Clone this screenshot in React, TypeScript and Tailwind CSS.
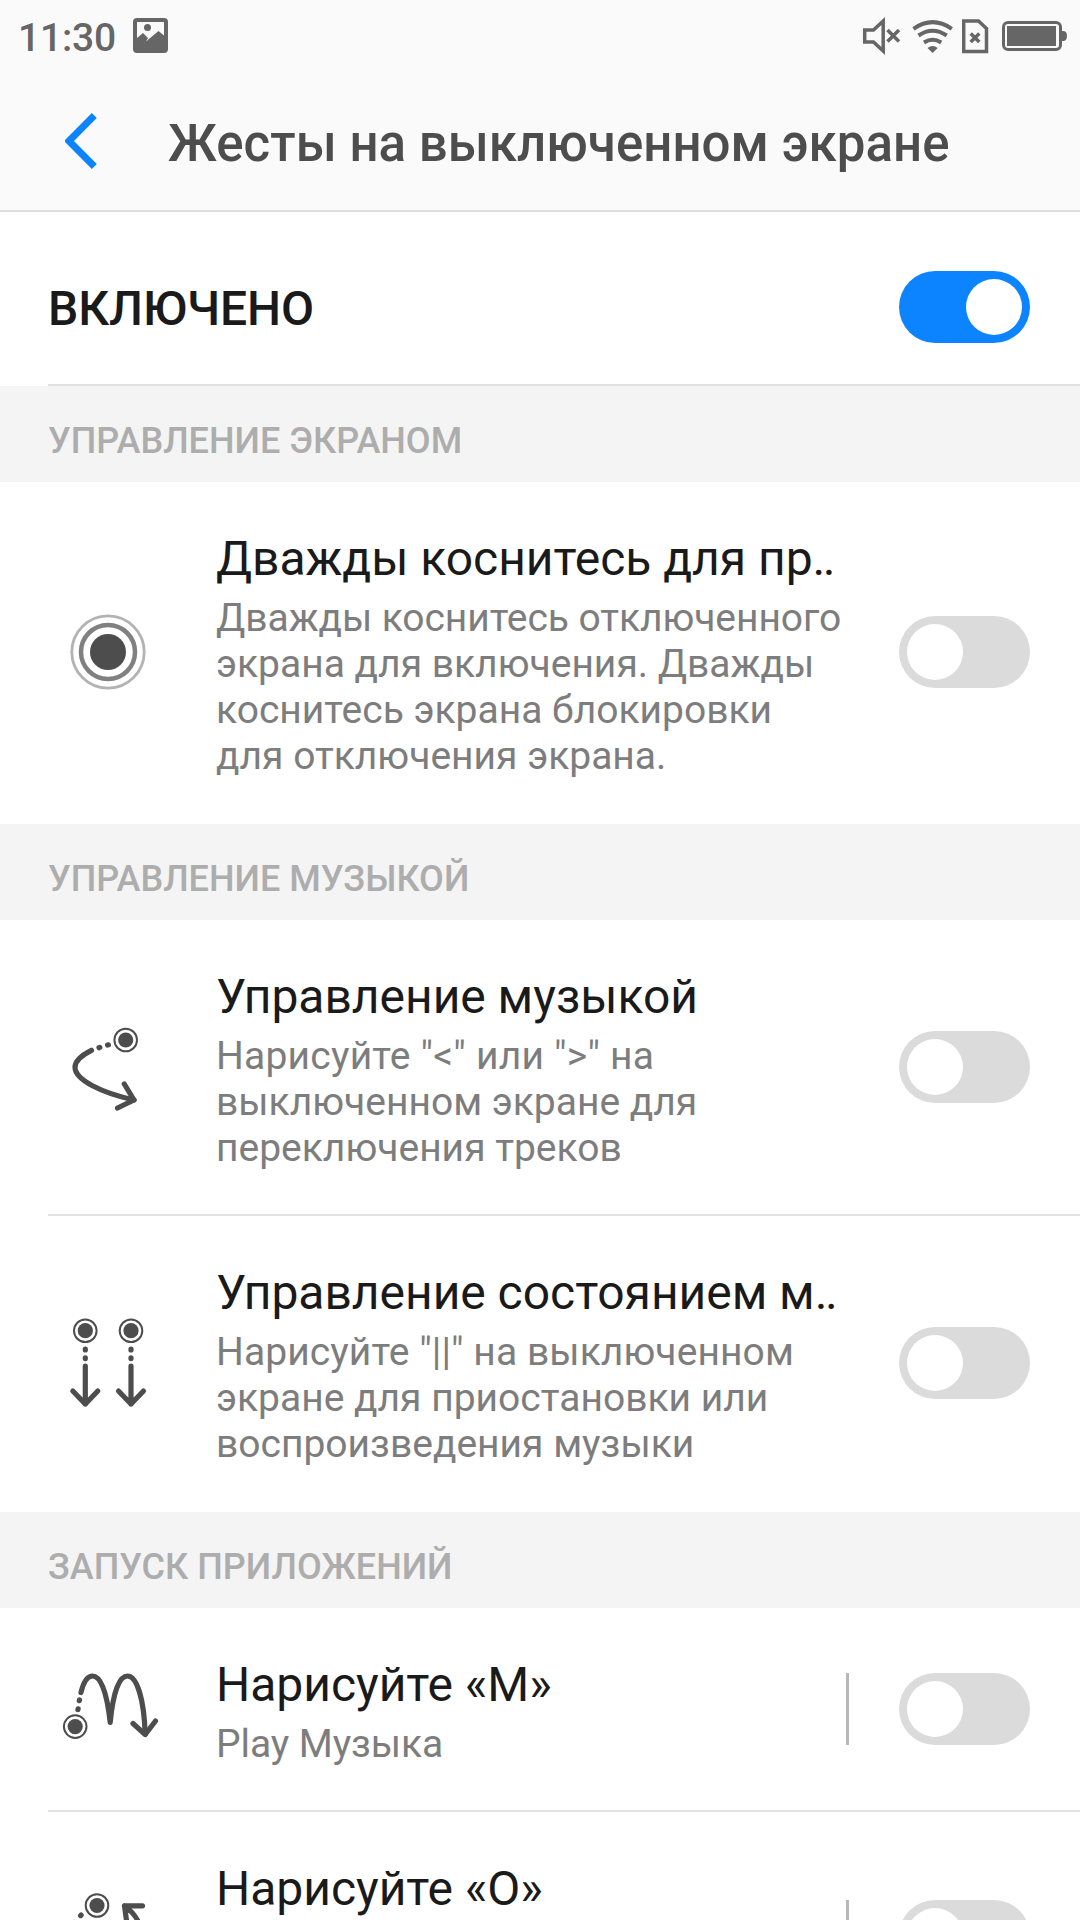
import type { ReactNode } from "react";

const DARK = "#4d4d4d";
const STATUS = "#666666";

function Toggle({ on = false }: { on?: boolean }) {
  return (
    <span
      className={`flex h-[72px] w-[131px] shrink-0 items-center rounded-full px-2 ${
        on ? "justify-end bg-[#0d84ff]" : "justify-start bg-[#dbdbdb]"
      }`}
    >
      <span className="h-[56px] w-[56px] rounded-full bg-white" />
    </span>
  );
}

// Start point of a gesture
function Dot({ x, y }: { x: number; y: number }) {
  return (
    <>
      <circle cx={x} cy={y} r="11.3" fill="none" stroke={DARK} strokeWidth="2" />
      <circle cx={x} cy={y} r="7.6" fill={DARK} stroke="none" />
    </>
  );
}

function Icon({ top, children }: { top: number; children: ReactNode }) {
  return (
    <svg
      className="shrink-0"
      width="140"
      height="120"
      viewBox={`-2 ${top} 140 120`}
      fill="none"
      stroke={DARK}
      strokeWidth="5.2"
      strokeLinecap="round"
      strokeLinejoin="round"
    >
      {children}
    </svg>
  );
}

function TapIcon() {
  return (
    <Icon top={2}>
      <circle cx="68" cy="62" r="36.2" stroke="#b3b3b3" strokeWidth="2.8" />
      <circle cx="68" cy="62" r="27" stroke="#808080" strokeWidth="4.5" />
      <circle cx="68" cy="62" r="18" fill={DARK} stroke="none" />
    </Icon>
  );
}

function TrackIcon() {
  return (
    <Icon top={-3}>
      <Dot x={85.7} y={30} />
      <path d="M67.6 35L68.4 34.8M59 37.7L59.8 37.4" />
      <path d="M51.5 40.3C42 45 35 50.5 35 57.3C35 70 62 83 94 90" />
      <path d="M84.3 74L94 90L77.5 98" />
    </Icon>
  );
}

function PauseIcon() {
  return (
    <Icon top={3}>
      {[45.3, 91].map((x) => (
        <g key={x}>
          <Dot x={x} y={30.7} />
          <path d={`M${x} 49.1V49.9M${x} 57.8V58.6M${x} 66V104M${x - 12.5} 91L${x} 104L${x + 12.5} 91`} />
        </g>
      ))}
    </Icon>
  );
}

function LetterMIcon() {
  return (
    <Icon top={-1}>
      <Dot x={35.2} y={76.6} />
      <path d="M37.9 59.6L38.1 58.8M39.3 50.7L39.5 49.9" />
      <path d="M41 42.5C43.5 32 47.5 26 52.5 26C61 26 67 43 70.2 72.5C73 43 79 26 87.5 26C97 26 104 49 105.2 84" />
      <path d="M93 73.5L105.2 84.5L115.5 71" />
    </Icon>
  );
}

function LetterOIcon() {
  return (
    <Icon top={16}>
      <Dot x={57} y={45.5} />
      <path d="M40.6 55.6L41.1 55.1M34 63L34.4 62.5" />
      <path d="M102.5 45.8H84.5L87 64M84.5 45.8C96 54 102 66 102 78C102 96 88 108 68 108C48 108 31 96 31 78C31 75 31.3 72 32 70" />
    </Icon>
  );
}

type GestureProps = {
  icon: ReactNode;
  title: string;
  lines: string[];
  leadClass?: string;
  split?: boolean;
  divider?: boolean;
};

function Gesture({ icon, title, lines, leadClass = "", split, divider }: GestureProps) {
  return (
    <div className="bg-white">
      <div className="flex items-center py-[43px] pr-[50px]">
        <div className="flex h-0 w-[216px] shrink-0 items-center justify-center">{icon}</div>
        <div className="min-w-0 flex-1 whitespace-nowrap pt-[5px]">
          <h2 className="text-[48px] leading-[57px] tracking-[-0.03px] text-[#1a1a1a]">{title}</h2>
          <div className="mt-2 text-[39px] leading-[46px] text-[#7d7d7d]">
            {lines.map((line, i) => (
              <p key={line} className={i === 0 ? leadClass : ""}>
                {line}
              </p>
            ))}
          </div>
        </div>
        {split && <span className="mr-[50px] h-[72px] w-[3px] shrink-0 bg-[#b8b8b8]" />}
        <Toggle />
      </div>
      <div className={`ml-12 h-[2px] ${divider ? "bg-[#e2e2e2]" : "bg-white"}`} />
    </div>
  );
}

function SectionTitle({ children }: { children: ReactNode }) {
  return (
    <div className="flex h-24 items-center bg-[#f4f4f4] pl-12 pt-[14px] text-[36px] font-medium text-[#adadad]">
      {children}
    </div>
  );
}

function StatusBar() {
  return (
    <div className="flex h-[72px] items-center pl-[18px] pr-[13px]">
      <span className="w-[115px] pt-[4px] text-[39px] font-medium tracking-[-0.2px] text-[#666666]">11:30</span>
      <svg width="36" height="36" viewBox="133 19 36 36">
        <path
          fill={STATUS}
          fillRule="evenodd"
          d="M137 19H164Q168 19 168 23V50Q168 54 164 54H137Q133 54 133 50V23Q133 19 137 19ZM137 23V39L143 34L148 39L146 42.5L158.5 32L164 36.5V23Z"
        />
        <circle cx="147.5" cy="28.5" r="3.5" fill={STATUS} />
      </svg>
      <div className="ml-auto flex">
        <svg width="39" height="72" viewBox="22 0 39 72" fill="none" stroke={STATUS} strokeWidth="3.5">
          <path d="M24.7 30H33.5L43.2 21V51L33.5 42H24.7Z" />
          <path d="M47.5 30L59 41.5M59 30L47.5 41.5" />
        </svg>
        <svg className="ml-[11px]" width="42" height="72" viewBox="72 0 42 72" fill="none" stroke={STATUS} strokeWidth="4">
          <path d="M73.5 28.8Q92.6 15.5 111.8 28.8" />
          <path d="M78.5 35.5Q92.6 26 106.7 35.5" />
          <path d="M84 42.5Q92.6 37 101.2 42.5" />
          <path d="M87.5 48Q92.6 43.8 97.7 48L92.6 53Z" fill={STATUS} stroke="none" />
        </svg>
        <svg className="ml-[8px]" width="27" height="72" viewBox="122 0 27 72" fill="none" stroke={STATUS} strokeWidth="3.5">
          <path d="M123.7 21H138.5L146.5 28.5V51.5H123.7Z" />
          <path d="M130.7 33.5L139.3 42M139.3 33.5L130.7 42" />
        </svg>
        <svg className="ml-[13px]" width="65" height="72" viewBox="162 0 65 72">
          <rect x="163.5" y="22.5" width="57" height="27" rx="4.5" fill="none" stroke={STATUS} strokeWidth="3" />
          <rect x="167" y="26" width="49" height="20" fill={STATUS} />
          <path d="M221.5 31H223Q227 31 227 36Q227 41 223 41H221.5Z" fill={STATUS} />
        </svg>
      </div>
    </div>
  );
}

export default function App() {
  return (
    <div className="h-[1920px] w-[1080px] overflow-hidden bg-white font-['Roboto',sans-serif]">
      <header className="flex h-[212px] flex-col border-b-2 border-[#dedede] bg-[#fafafa]">
        <StatusBar />
        <div className="flex flex-1 items-center">
          <svg className="ml-[65px]" width="33" height="58" viewBox="65 112 33 58" fill="none">
            <path d="M94.3 115.5L69 141L94.3 166.5" stroke="#0d84ff" strokeWidth="7" />
          </svg>
          <h1 className="ml-[70px] pt-[6px] text-[51px] font-medium tracking-[0.04px] text-[#4d4d4d]">
            Жесты на выключенном экране
          </h1>
        </div>
      </header>

      {/* Master switch */}
      <div className="flex h-[172px] items-center justify-between bg-white pl-12 pr-[50px] pt-[18px]">
        <span className="pt-[3px] text-[48px] font-medium tracking-[-0.1px] text-[#1a1a1a]">ВКЛЮЧЕНО</span>
        <Toggle on />
      </div>
      <div className="ml-12 h-[2px] bg-[#e2e2e2]" />

      <SectionTitle>УПРАВЛЕНИЕ ЭКРАНОМ</SectionTitle>
      <Gesture
        icon={<TapIcon />}
        title="Дважды коснитесь для пр‥"
        lines={["Дважды коснитесь отключенного", "экрана для включения. Дважды", "коснитесь экрана блокировки", "для отключения экрана."]}
        leadClass="tracking-[-0.07px]"
      />

      <SectionTitle>УПРАВЛЕНИЕ МУЗЫКОЙ</SectionTitle>
      <Gesture
        icon={<TrackIcon />}
        title="Управление музыкой"
        lines={['Нарисуйте "<" или ">" на', "выключенном экране для", "переключения треков"]}
        leadClass="tracking-[0.22px]"
        divider
      />
      <Gesture
        icon={<PauseIcon />}
        title="Управление состоянием м‥"
        lines={['Нарисуйте "||" на выключенном', "экране для приостановки или", "воспроизведения музыки"]}
        leadClass="tracking-[0.08px]"
      />

      <SectionTitle>ЗАПУСК ПРИЛОЖЕНИЙ</SectionTitle>
      <Gesture icon={<LetterMIcon />} title="Нарисуйте «M»" lines={["Play Музыка"]} leadClass="tracking-[-0.08px]" split divider />
      <Gesture icon={<LetterOIcon />} title="Нарисуйте «O»" lines={["\u00a0", "\u00a0\u00a0"]} split divider />
    </div>
  );
}
